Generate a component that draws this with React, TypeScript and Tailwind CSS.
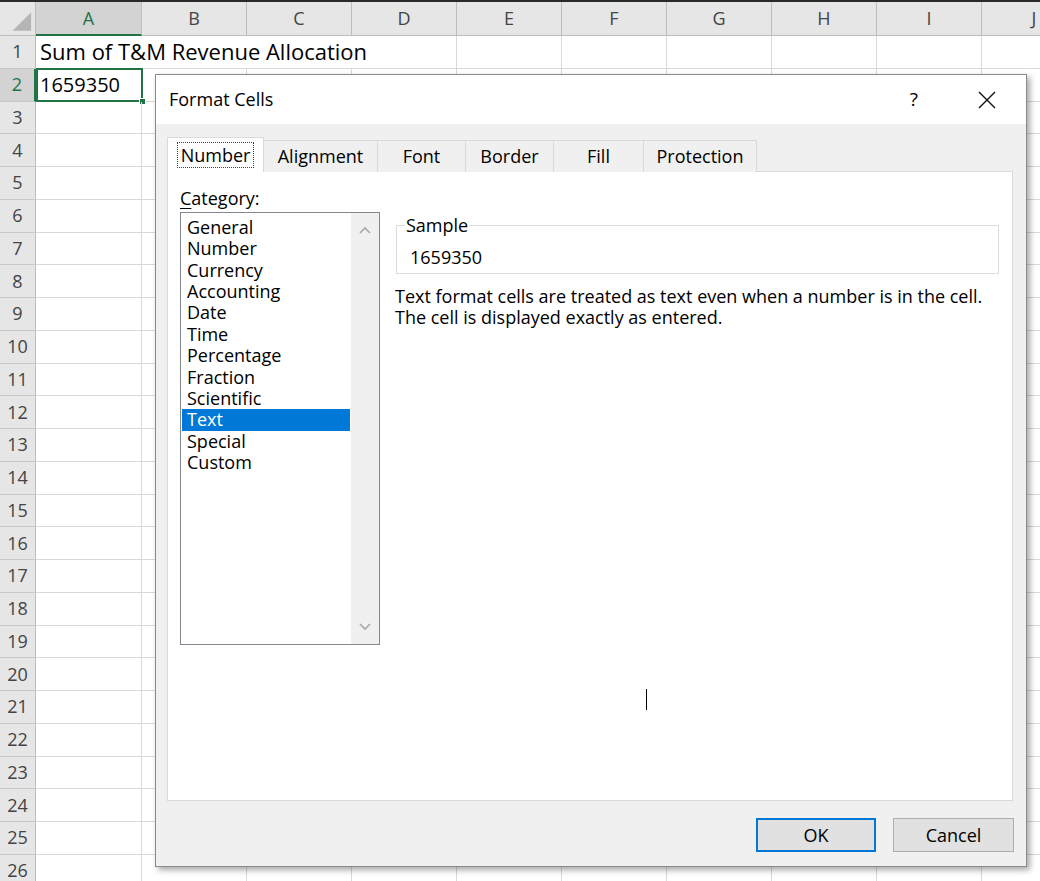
import React from "react";

const cols = ["A", "B", "C", "D", "E", "F", "G", "H", "I", "J"];
const rows = Array.from({ length: 26 }, (_, i) => i + 1);
const categories = [
  "General",
  "Number",
  "Currency",
  "Accounting",
  "Date",
  "Time",
  "Percentage",
  "Fraction",
  "Scientific",
  "Text",
  "Special",
  "Custom",
];

function Corner() {
  return (
    <div className="w-[36px] h-full shrink-0 bg-[#e6e6e6] border-r border-b border-[#bdbdbd] flex items-end justify-end">
      <svg width="36" height="34" viewBox="0 0 36 34">
        <polygon points="13,30 32,30 32,11" fill="#b5b5b5" />
      </svg>
    </div>
  );
}

function Sheet() {
  return (
    <div className="flex flex-col">
      <div className="h-[2px] bg-[#2a2a2a]" />
      <div className="flex h-[34px]">
        <Corner />
        {cols.map((c) => (
          <div
            key={c}
            className={
              c === "A"
                ? "w-[106px] shrink-0 h-full flex items-center justify-center bg-[#d3d3d3] border-r border-[#bdbdbd] border-b-2 border-b-[#217346] text-[#217346] text-[18px]"
                : "w-[105px] shrink-0 h-full flex items-center justify-center bg-[#e6e6e6] border-r border-b border-[#bdbdbd] text-[#444] text-[18px]"
            }
          >
            {c}
          </div>
        ))}
      </div>
      {rows.map((r) => (
        <div key={r} className="flex h-[32.75px]">
          <div
            className={
              r === 2
                ? "w-[36px] shrink-0 h-full flex items-center justify-center bg-[#d3d3d3] border-r-2 border-r-[#217346] border-b border-b-[#c8c8c8] text-[#217346] text-[18px]"
                : "w-[36px] shrink-0 h-full flex items-center justify-center bg-[#e6e6e6] border-r border-r-[#bdbdbd] border-b border-b-[#c8c8c8] text-[#444] text-[18px]"
            }
          >
            {r}
          </div>
          {r === 1 ? (
            <>
              <div className="w-[421px] shrink-0 h-full border-r border-b border-[#d9d9d9] flex items-center pl-[4px] text-[22px] text-black whitespace-nowrap">
                Sum of T&amp;M Revenue Allocation
              </div>
              {cols.slice(4).map((c) => (
                <div key={c} className="w-[105px] shrink-0 h-full border-r border-b border-[#d9d9d9]" />
              ))}
            </>
          ) : (
            cols.map((c) => (
              <div
                key={c}
                className={
                  c === "A"
                    ? "relative w-[106px] shrink-0 h-full border-r border-b border-[#d9d9d9] flex items-center pl-[4px] text-[20px] text-black"
                    : "w-[105px] shrink-0 h-full border-r border-b border-[#d9d9d9]"
                }
              >
                {c === "A" && r === 2 ? (
                  <>
                    <span>1659350</span>
                    <div className="absolute left-0 top-[-1px] w-[107px] h-[34px] border-2 border-[#217346]" />
                    <div className="absolute left-[103px] top-[29px] w-[7px] h-[7px] bg-[#217346] border border-white" />
                  </>
                ) : null}
              </div>
            ))
          )}
        </div>
      ))}
    </div>
  );
}

function Chevron({ up }: { up: boolean }) {
  return (
    <svg width="14" height="10" viewBox="0 0 14 10">
      <polyline
        points={up ? "2,8 7,3 12,8" : "2,2 7,7 12,2"}
        fill="none"
        stroke="#a8a8a8"
        strokeWidth="1.6"
      />
    </svg>
  );
}

function Dialog() {
  const tabBase =
    "h-[32px] flex items-center justify-center bg-[#f0f0f0] border-t border-l border-r border-[#d9d9d9] -ml-[1px] text-[18px] text-black";
  return (
    <div className="absolute left-[155px] top-[74px] w-[872px] h-[793px] border border-[#8a8a8a] bg-[#f0f0f0] shadow-[3px_3px_6px_rgba(0,0,0,0.35)] flex flex-col font-['Open_Sans',sans-serif]">
      <div className="h-[49px] bg-white flex items-center pl-[13px] pr-[30px] shrink-0">
        <span className="text-[18px] text-black">Format Cells</span>
        <span className="ml-auto text-[19px] text-black mr-[60px]">?</span>
        <svg width="18" height="18" viewBox="0 0 18 18">
          <path d="M1 1 L17 17 M17 1 L1 17" stroke="#111" strokeWidth="1.4" />
        </svg>
      </div>
      <div className="flex-1 flex flex-col pt-[13px] px-[11px]">
        <div className="flex items-end h-[35px] relative z-10">
          <div className="w-[97px] h-[35px] flex items-center justify-center bg-white border-t border-l border-r border-[#d9d9d9]">
            <span className="border border-dotted border-[#444] px-[3px] leading-[24px] text-[18px] text-black">
              Number
            </span>
          </div>
          <div className={`w-[115px] ${tabBase}`}>Alignment</div>
          <div className={`w-[89px] ${tabBase}`}>Font</div>
          <div className={`w-[89px] ${tabBase}`}>Border</div>
          <div className={`w-[91px] ${tabBase}`}>Fill</div>
          <div className={`w-[114px] ${tabBase}`}>Protection</div>
        </div>
        <div className="-mt-[1px] w-[846px] h-[630px] bg-white border border-[#d9d9d9] flex pt-[15px] pl-[12px] text-[18px] text-black">
          <div className="w-[200px] flex flex-col">
            <div className="leading-[22px]">
              <span className="underline underline-offset-[3px]">C</span>ategory:
            </div>
            <div className="mt-[3px] h-[433px] border border-[#828790] flex">
              <div className="flex-1 p-[1px] pt-[4px]">
                {categories.map((c) => (
                  <div
                    key={c}
                    className={
                      c === "Text"
                        ? "h-[21.36px] leading-[21.36px] pl-[5px] bg-[#0078d7] text-white"
                        : "h-[21.36px] leading-[21.36px] pl-[5px]"
                    }
                  >
                    {c}
                  </div>
                ))}
              </div>
              <div className="w-[28px] bg-[#f0f0f0] flex flex-col items-center justify-between py-[12px]">
                <Chevron up />
                <Chevron up={false} />
              </div>
            </div>
          </div>
          <div className="flex-1 ml-[16px] mr-[13px] flex flex-col">
            <fieldset className="mt-[26px] border border-[#dcdcdc] px-[13px] pb-[5px]">
              <legend className="ml-[-5px] px-[1px] leading-[24px]">Sample</legend>
              <div className="leading-[22px] pt-[9px]">1659350</div>
            </fieldset>
            <div className="mt-[12px] ml-[-1px] leading-[21px] whitespace-nowrap">
              <div>Text format cells are treated as text even when a number is in the cell.</div>
              <div>The cell is displayed exactly as entered.</div>
            </div>
          </div>
        </div>
        <div className="flex justify-end mt-[17px] mr-[1px]">
          <button className="w-[120px] h-[34px] bg-[#e1e1e1] border-2 border-[#0078d7] text-[18px] text-black">
            OK
          </button>
          <button className="ml-[17px] w-[121px] h-[34px] bg-[#e1e1e1] border border-[#adadad] text-[18px] text-black">
            Cancel
          </button>
        </div>
      </div>
    </div>
  );
}

export default function App() {
  return (
    <div className="relative w-[1040px] h-[881px] overflow-hidden bg-white font-['Open_Sans',sans-serif]">
      <Sheet />
      <Dialog />
      <div className="absolute left-[646px] top-[689px] w-[1px] h-[21px] bg-black" />
    </div>
  );
}
